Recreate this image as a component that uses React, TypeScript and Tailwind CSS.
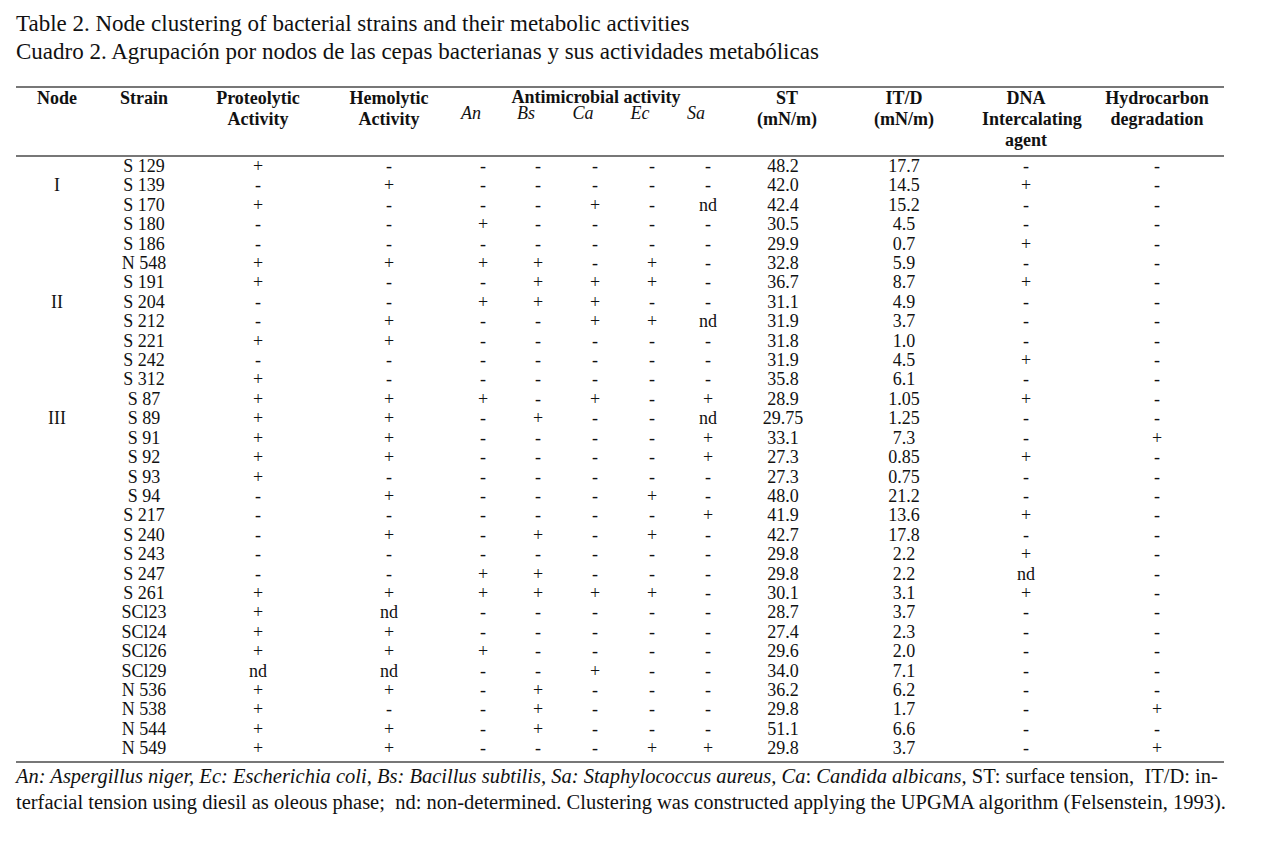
import React from 'react';

type Row = [string, string, string, string, string, string, string, string, string, string, string, string];

const rows: Row[] = [
    ['S 129', '+', '-', '-', '-', '-', '-', '-', '48.2', '17.7', '-', '-'],
    ['S 139', '-', '+', '-', '-', '-', '-', '-', '42.0', '14.5', '+', '-'],
    ['S 170', '+', '-', '-', '-', '+', '-', 'nd', '42.4', '15.2', '-', '-'],
    ['S 180', '-', '-', '+', '-', '-', '-', '-', '30.5', '4.5', '-', '-'],
    ['S 186', '-', '-', '-', '-', '-', '-', '-', '29.9', '0.7', '+', '-'],
    ['N 548', '+', '+', '+', '+', '-', '+', '-', '32.8', '5.9', '-', '-'],
    ['S 191', '+', '-', '-', '+', '+', '+', '-', '36.7', '8.7', '+', '-'],
    ['S 204', '-', '-', '+', '+', '+', '-', '-', '31.1', '4.9', '-', '-'],
    ['S 212', '-', '+', '-', '-', '+', '+', 'nd', '31.9', '3.7', '-', '-'],
    ['S 221', '+', '+', '-', '-', '-', '-', '-', '31.8', '1.0', '-', '-'],
    ['S 242', '-', '-', '-', '-', '-', '-', '-', '31.9', '4.5', '+', '-'],
    ['S 312', '+', '-', '-', '-', '-', '-', '-', '35.8', '6.1', '-', '-'],
    ['S 87', '+', '+', '+', '-', '+', '-', '+', '28.9', '1.05', '+', '-'],
    ['S 89', '+', '+', '-', '+', '-', '-', 'nd', '29.75', '1.25', '-', '-'],
    ['S 91', '+', '+', '-', '-', '-', '-', '+', '33.1', '7.3', '-', '+'],
    ['S 92', '+', '+', '-', '-', '-', '-', '+', '27.3', '0.85', '+', '-'],
    ['S 93', '+', '-', '-', '-', '-', '-', '-', '27.3', '0.75', '-', '-'],
    ['S 94', '-', '+', '-', '-', '-', '+', '-', '48.0', '21.2', '-', '-'],
    ['S 217', '-', '-', '-', '-', '-', '-', '+', '41.9', '13.6', '+', '-'],
    ['S 240', '-', '+', '-', '+', '-', '+', '-', '42.7', '17.8', '-', '-'],
    ['S 243', '-', '-', '-', '-', '-', '-', '-', '29.8', '2.2', '+', '-'],
    ['S 247', '-', '-', '+', '+', '-', '-', '-', '29.8', '2.2', 'nd', '-'],
    ['S 261', '+', '+', '+', '+', '+', '+', '-', '30.1', '3.1', '+', '-'],
    ['SCl23', '+', 'nd', '-', '-', '-', '-', '-', '28.7', '3.7', '-', '-'],
    ['SCl24', '+', '+', '-', '-', '-', '-', '-', '27.4', '2.3', '-', '-'],
    ['SCl26', '+', '+', '+', '-', '-', '-', '-', '29.6', '2.0', '-', '-'],
    ['SCl29', 'nd', 'nd', '-', '-', '+', '-', '-', '34.0', '7.1', '-', '-'],
    ['N 536', '+', '+', '-', '+', '-', '-', '-', '36.2', '6.2', '-', '-'],
    ['N 538', '+', '-', '-', '+', '-', '-', '-', '29.8', '1.7', '-', '+'],
    ['N 544', '+', '+', '-', '+', '-', '-', '-', '51.1', '6.6', '-', '-'],
    ['N 549', '+', '+', '-', '-', '-', '+', '+', '29.8', '3.7', '-', '+'],
];

const nodes: Record<number, string> = { 1: 'I', 7: 'II', 13: 'III' };

const cols = 'grid grid-cols-[82px_92px_136px_126px_62px_48px_66px_48px_64px_86px_156px_88px_154px]';

export default function App() {
    return (
        <div className="min-h-[858px] w-[1277px] bg-white pl-4 text-[#111] font-['Liberation_Serif','Times_New_Roman',serif]">
            <div className="pt-[10px] text-[23px] leading-[28px]">
                <p>Table 2. Node clustering of bacterial strains and their metabolic activities</p>
                <p>Cuadro 2. Agrupación por nodos de las cepas bacterianas y sus actividades metabólicas</p>
            </div>

            <div className="mt-[20px] w-[1208px]">
                {/* header */}
                <div className={`${cols} border-t-2 border-b-2 border-[#777] pb-[4px] text-center text-[18px] font-bold leading-[21px]`}>
                    <div>Node</div>
                    <div>Strain</div>
                    <div>Proteolytic<br />Activity</div>
                    <div>Hemolytic<br />Activity</div>
                    <div className="col-span-5">
                        <div className="leading-[18px]">Antimicrobial activity</div>
                        <div className="grid grid-cols-[62px_48px_66px_48px_64px] font-normal italic leading-[14px]">
                            <div className="pr-6">An</div>
                            <div className="pr-6">Bs</div>
                            <div className="pr-6">Ca</div>
                            <div className="pr-6">Ec</div>
                            <div className="pr-6">Sa</div>
                        </div>
                    </div>
                    <div className="pl-2">ST<br />(mN/m)</div>
                    <div>IT/D<br />(mN/m)</div>
                    <div>DNA<br />Intercalating<br />agent</div>
                    <div className="pl-5">Hydrocarbon<br />degradation</div>
                </div>

                {/* body */}
                <div className="pb-[2px] border-b-2 border-[#777] text-center text-[18px] leading-[19.4px]">
                    {rows.map((r, i) => (
                        <div key={r[0]} className={cols}>
                            <div>{nodes[i] ?? ''}</div>
                            {r.map((v, j) => (
                                <div key={j} className={j === 11 ? 'pl-5' : ''}>{v}</div>
                            ))}
                        </div>
                    ))}
                </div>
            </div>

            <div className="text-[20.5px] leading-[26px] whitespace-nowrap">
                <p>
                    <i>An: Aspergillus niger, Ec: Escherichia coli, Bs: Bacillus subtilis, Sa: Staphylococcus aureus, Ca</i>: <i>Candida albicans,</i> ST: surface tension,&nbsp; IT/D: in-
                </p>
                <p>terfacial tension using diesil as oleous phase;&nbsp; nd: non-determined. Clustering was constructed applying the UPGMA algorithm (Felsenstein, 1993).</p>
            </div>
        </div>
    );
}
